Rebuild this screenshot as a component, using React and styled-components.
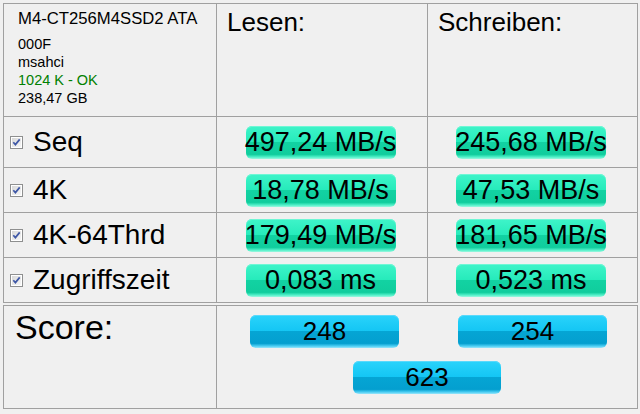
import styled, { createGlobalStyle } from 'styled-components'

const GlobalStyle = createGlobalStyle`
body {
  margin: 0;
  background: #f0f0f0;
  font-family: "Liberation Sans", Arial, sans-serif;
}
`

const Page = styled.div`
padding: 3px;
width: 640px;
height: 414px;
box-sizing: border-box;
`

const Table = styled.div`
display: grid;
grid-template-columns: 212px 210px 209px;
grid-template-rows: 112px 50px 44px 44px 44px;
gap: 1px;
padding: 1px;
width: 635px;
box-sizing: border-box;
background: #a0a0a0;
`

const ScoreTable = styled.div`
display: grid;
grid-template-columns: 212px 420px;
grid-template-rows: 102px;
gap: 1px;
padding: 1px;
margin-top: 2px;
width: 635px;
box-sizing: border-box;
background: #a0a0a0;
`

const Cell = styled.div`
background: #f0f0f0;
box-sizing: border-box;
`

const DriveCell = styled(Cell)`
padding: 5px 0 0 14px;
`

const DriveName = styled.div`
font-size: 16.7px;
color: #000;
margin-bottom: 6px;
`

const InfoLine = styled.div`
font-size: 14.5px;
line-height: 18px;
color: ${props => props.color || '#000'};
`

const HeadCell = styled(Cell)`
padding: 3px 0 0 10px;
font-size: 26px;
color: #000;
`

const LabelCell = styled(Cell)`
display: flex;
align-items: center;
padding-left: 6px;
gap: 10px;
font-size: 28px;
color: #000;
`

const ValueCell = styled(Cell)`
display: flex;
align-items: center;
justify-content: center;
padding-right: ${props => props.shift || 0}px;
`

const Pill = styled.div`
width: ${props => props.w || 150}px;
height: 33px;
border-radius: 6px;
display: flex;
align-items: center;
justify-content: center;
white-space: nowrap;
font-size: ${props => props.blue ? 26 : 27}px;
color: #000;
background: ${props => props.blue
    ? 'linear-gradient(to bottom, #2ad3fb 0%, #14c6f4 48%, #05a5d4 50%, #049fcf 86%, #49cdf3 94%, #9be6fb 100%)'
    : 'linear-gradient(to bottom, #3ff4c9 0%, #26ebbb 48%, #12d2a2 50%, #10cd9d 86%, #4ff0c8 94%, #9ef8e0 100%)'};
box-shadow: inset 0 1px 0 ${props => props.blue ? '#5ad9fb' : '#6ff7d5'};
`

const ScoreLabel = styled(Cell)`
padding: 2px 0 0 11px;
font-size: 34px;
color: #000;
`

const ScoreCell = styled(Cell)`
display: flex;
flex-direction: column;
align-items: center;
padding-top: 9px;
gap: 13px;
`

const ScoreRow = styled.div`
display: flex;
justify-content: space-between;
align-self: stretch;
padding: 0 30px 0 33px;
`

const CheckBox = () => (
    <svg width="13" height="13" viewBox="0 0 13 13">
        <defs>
            <linearGradient id="cbg" x1="0" y1="0" x2="1" y2="1">
                <stop offset="0" stopColor="#d8d8d8" />
                <stop offset="1" stopColor="#f6f6f6" />
            </linearGradient>
        </defs>
        <rect x="0.5" y="0.5" width="12" height="12" fill="#fff" stroke="#8e8f8f" />
        <rect x="2" y="2" width="9" height="9" fill="url(#cbg)" />
        <path d="M3.3 6.2 L5.4 8.6 L9.7 3.4" fill="none" stroke="#3f58a6" strokeWidth="1.7" />
    </svg>
)

const rows = [
    { name: 'Seq', read: '497,24 MB/s', write: '245,68 MB/s' },
    { name: '4K', read: '18,78 MB/s', write: '47,53 MB/s' },
    { name: '4K-64Thrd', read: '179,49 MB/s', write: '181,65 MB/s' },
    { name: 'Zugriffszeit', read: '0,083 ms', write: '0,523 ms' },
]

const App = () => {
    return (
        <Page>
            <GlobalStyle />
            <Table>
                <DriveCell>
                    <DriveName>M4-CT256M4SSD2 ATA</DriveName>
                    <InfoLine>000F</InfoLine>
                    <InfoLine>msahci</InfoLine>
                    <InfoLine color="#008000">1024 K - OK</InfoLine>
                    <InfoLine>238,47 GB</InfoLine>
                </DriveCell>
                <HeadCell>Lesen:</HeadCell>
                <HeadCell>Schreiben:</HeadCell>
                {rows.map(r => (
                    <>
                        <LabelCell key={r.name + 'l'}>
                            <CheckBox />
                            {r.name}
                        </LabelCell>
                        <ValueCell key={r.name + 'r'} shift={3}>
                            <Pill>{r.read}</Pill>
                        </ValueCell>
                        <ValueCell key={r.name + 'w'} shift={3}>
                            <Pill>{r.write}</Pill>
                        </ValueCell>
                    </>
                ))}
            </Table>
            <ScoreTable>
                <ScoreLabel>Score:</ScoreLabel>
                <ScoreCell>
                    <ScoreRow>
                        <Pill blue w={149}>248</Pill>
                        <Pill blue w={149}>254</Pill>
                    </ScoreRow>
                    <Pill blue w={148}>623</Pill>
                </ScoreCell>
            </ScoreTable>
        </Page>
    )
}

export default App
